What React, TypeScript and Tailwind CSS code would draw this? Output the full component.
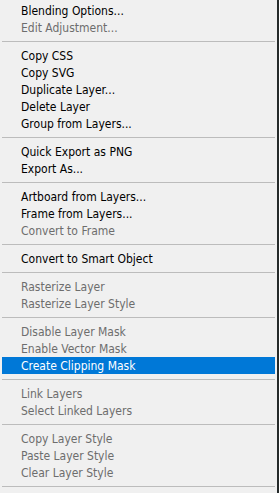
type Item = { label: string; disabled?: boolean; active?: boolean };

const groups: Item[][] = [
  [{ label: 'Blending Options...' }, { label: 'Edit Adjustment...', disabled: true }],
  [
    { label: 'Copy CSS' },
    { label: 'Copy SVG' },
    { label: 'Duplicate Layer...' },
    { label: 'Delete Layer' },
    { label: 'Group from Layers...' },
  ],
  [{ label: 'Quick Export as PNG' }, { label: 'Export As...' }],
  [
    { label: 'Artboard from Layers...' },
    { label: 'Frame from Layers...' },
    { label: 'Convert to Frame', disabled: true },
  ],
  [{ label: 'Convert to Smart Object' }],
  [
    { label: 'Rasterize Layer', disabled: true },
    { label: 'Rasterize Layer Style', disabled: true },
  ],
  [
    { label: 'Disable Layer Mask', disabled: true },
    { label: 'Enable Vector Mask', disabled: true },
    { label: 'Create Clipping Mask', active: true },
  ],
  [
    { label: 'Link Layers', disabled: true },
    { label: 'Select Linked Layers', disabled: true },
  ],
  [
    { label: 'Copy Layer Style', disabled: true },
    { label: 'Paste Layer Style', disabled: true },
    { label: 'Clear Layer Style', disabled: true },
  ],
];

const MenuRow = ({ item }: { item: Item }) => {
  const color = item.active
    ? 'bg-[#0078d7] text-white'
    : item.disabled
    ? 'text-[#6d6d6d]'
    : 'text-black';
  return (
    <div className={`h-[17px] mx-[2px] pl-[19px] pt-[1px] flex items-center leading-none whitespace-nowrap ${color}`}>
      {item.label}
    </div>
  );
};

export default function App() {
  return (
    <div className="flex w-[279px] h-[493px] overflow-hidden">
      <div
        className="w-[277px] h-full bg-[#f0f0f0] pt-[2px] text-[12px]"
        style={{ fontFamily: '"DejaVu Sans Condensed", "Liberation Sans", sans-serif' }}
      >
        {groups.map((group, gi) => (
          <div key={gi}>
            {group.map((item) => (
              <MenuRow key={item.label} item={item} />
            ))}
            {/* separator */}
            <div className="py-[5px] pl-[2px] pr-[2px]">
              <div className="h-px bg-[#bcbcbc]" />
            </div>
          </div>
        ))}
      </div>
      <div className="w-[2px] h-full bg-[#252a2a]" />
    </div>
  );
}
